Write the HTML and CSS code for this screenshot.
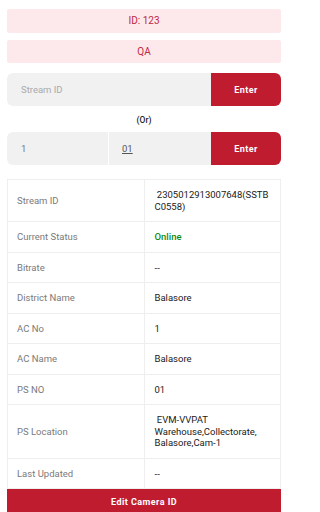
FILE: index.html
```html
<!DOCTYPE html>
<html>
<head>
<meta charset="utf-8">
<link rel="stylesheet" href="styles.css">
</head>
<body>
<div class="page">
  <div class="tag tag-first">ID: 123</div>
  <div class="tag">QA</div>

  <div class="entry">
    <div class="field field-wide"><span class="placeholder">Stream ID</span></div>
    <div class="btn">Enter</div>
  </div>

  <div class="or">(Or)</div>

  <div class="entry">
    <div class="field field-half">1</div>
    <div class="field field-half field-split"><span class="ul">01</span></div>
    <div class="btn">Enter</div>
  </div>

  <table class="info">
    <tr><td class="lbl">Stream ID</td><td class="val brk">&nbsp;2305012913007648(SSTBC0558)</td></tr>
    <tr><td class="lbl">Current Status</td><td class="val online">Online</td></tr>
    <tr><td class="lbl">Bitrate</td><td class="val">--</td></tr>
    <tr><td class="lbl">District Name</td><td class="val">Balasore</td></tr>
    <tr><td class="lbl">AC No</td><td class="val">1</td></tr>
    <tr><td class="lbl">AC Name</td><td class="val">Balasore</td></tr>
    <tr><td class="lbl">PS NO</td><td class="val">01</td></tr>
    <tr><td class="lbl">PS Location</td><td class="val">&nbsp;EVM-VVPAT Warehouse,Collectorate, Balasore,Cam-1</td></tr>
    <tr><td class="lbl">Last Updated</td><td class="val">--</td></tr>
  </table>

  <div class="edit">Edit Camera ID</div>
</div>
</body>
</html>
```

FILE: styles.css
```css
* { box-sizing: border-box; }
html, body { margin: 0; padding: 0; background: #fff; }
body {
  font-family: Roboto, "Liberation Sans", sans-serif;
  color: #222;
  width: 288px;
  overflow: hidden;
}
.page {
  padding: 9px 7px 0 7px;
}
.tag {
  height: 23.5px;
  background: #fde9eb;
  color: #c0283f;
  font-size: 10px;
  display: flex;
  align-items: center;
  justify-content: center;
  border-radius: 2px;
  margin-top: 7px;
}
.tag-first { margin-top: 0; }
.entry {
  margin-top: 10px;
  height: 33px;
  display: flex;
}
.field {
  background: #f1f1f1;
  display: flex;
  align-items: center;
  font-size: 9.5px;
  color: #777;
}
.field-wide {
  width: 204px;
  padding-left: 14px;
  border-radius: 6px 0 0 6px;
}
.placeholder { color: #aaa; }
.field-half {
  width: 101px;
  padding-left: 14px;
}
.field-half:first-child { border-radius: 6px 0 0 6px; }
.field-split {
  margin-left: 1px;
  width: 102px;
  padding-left: 13px;
}
.ul { text-decoration: underline; color: #555; }
.btn {
  flex: 1;
  background: #c01c2f;
  color: #fff;
  font-weight: bold;
  font-size: 9px;
  letter-spacing: 0.4px;
  display: flex;
  align-items: center;
  justify-content: center;
  border-radius: 0 6px 6px 0;
}
.or + .entry { margin-top: 0; }
.or {
  height: 26px;
  display: flex;
  align-items: center;
  justify-content: center;
  font-size: 8.5px;
  font-weight: 500;
  color: #222;
  padding-top: 1px;
}
.info {
  margin-top: 14px;
  width: 274px;
  border-collapse: collapse;
  table-layout: fixed;
  font-size: 9.5px;
  line-height: 11.5px;
}
.info td {
  border: 1px solid #eeeeee;
  padding: 9px 9px;
  vertical-align: middle;
  width: 50%;
}
.info td.lbl { color: #7a7a7a; }
.info td.val { color: #1a1a1a; padding-left: 10px; padding-right: 6px; }
.info td.brk { word-break: break-all; }
.info td.online { color: #138a12; font-weight: 500; }
.edit {
  height: 26px;
  background: #c01c2f;
  color: #fff;
  font-weight: bold;
  font-size: 9px;
  letter-spacing: 0.45px;
  display: flex;
  align-items: center;
  justify-content: center;
}
```
